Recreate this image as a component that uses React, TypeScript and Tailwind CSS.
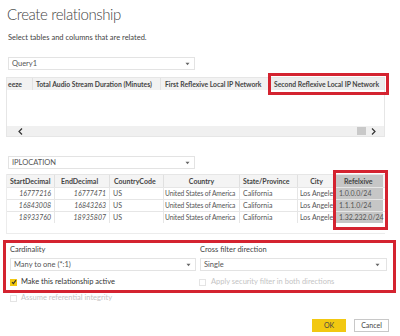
import React from "react";

const Caret = () => (
  <svg width="5" height="4" viewBox="0 0 5 4" className="shrink-0">
    <path d="M0.5 0.8 L4.5 0.8 L2.5 3.2 Z" fill="#666" />
  </svg>
);

const Dropdown = ({ label, w, caretPad = "pr-[4px]" }: { label: string; w: string; caretPad?: string }) => (
  <div className={`${w} h-[13px] border border-[#e3e3e3] bg-white flex items-center justify-between pl-[3px] ${caretPad}`}>
    <span className="text-[7.5px] leading-[11px] text-[#555]">{label}</span>
    <Caret />
  </div>
);

const Check = ({ on, dim }: { on?: boolean; dim?: boolean }) =>
  on ? (
    <div className="w-[7px] h-[7px] bg-[#f2c811] flex items-center justify-center shrink-0">
      <svg width="6" height="6" viewBox="0 0 6 6">
        <path d="M1 3.2 L2.4 4.6 L5 1.2" stroke="#333" strokeWidth="1.1" fill="none" />
      </svg>
    </div>
  ) : (
    <div className={`w-[7px] h-[7px] border ${dim ? "border-[#e4e4e4]" : "border-[#aaa]"} bg-white shrink-0`} />
  );

export default function App() {
  const rows = [
    ["16777216", "16777471", "1.0.0.0/24"],
    ["16843008", "16843263", "1.1.1.0/24"],
    ["18933760", "18935807", "1.32.232.0/24"],
  ];
  return (
    <div
      className="w-[400px] h-[336px] bg-white flex flex-col overflow-hidden text-[#333]"
      style={{ fontFamily: 'Lato, "Open Sans", sans-serif' }}
    >
      <div className="h-[28px] pl-[7px] text-[15px] font-light leading-[28px] tracking-[-0.4px] text-[#444]">
        Create relationship
      </div>
      <div className="mt-[4px] h-[12px] pl-[8px] text-[7.5px] leading-[12px] text-[#444]">
        Select tables and columns that are related.
      </div>

      <div className="mt-[13px] ml-[8px]">
        <Dropdown label="Query1" w="w-[187px]" />
      </div>

      {/* Table 1 */}
      <div className="relative mt-[7px] ml-[6px] w-[379px] h-[60px] border border-[#e6e6e6] flex flex-col">
        <div className="h-[12px] bg-[#f2f2f2] flex items-center text-[6.8px] font-bold text-[#444] whitespace-nowrap overflow-hidden">
          <div className="w-[26px] pl-[1px] border-r border-[#e2e2e2] h-full flex items-center">eeze</div>
          <div className="w-[128px] pl-[3px] border-r border-[#e2e2e2] h-full flex items-center">Total Audio Stream Duration (Minutes)</div>
          <div className="w-[108px] pl-[4px] border-r border-[#e2e2e2] h-full flex items-center">First Reflexive Local IP Network</div>
          <div className="flex-1 pl-[5px] h-full flex items-center bg-[#ececec]">Second Reflexive Local IP Network</div>
        </div>
        <div className="flex-1" />
        <div className="h-[10px] bg-[#f0f0f0] flex items-center justify-between pl-[11px] pr-[8px]">
          <svg width="5" height="7" viewBox="0 0 5 7">
            <path d="M4 0.5 L1 3.5 L4 6.5" stroke="#333" strokeWidth="1.2" fill="none" />
          </svg>
          <div className="flex items-center gap-[5px]">
            <div className="w-[9px] h-[8px] bg-[#c9c9c9]" />
            <svg width="5" height="7" viewBox="0 0 5 7">
              <path d="M1 0.5 L4 3.5 L1 6.5" stroke="#333" strokeWidth="1.2" fill="none" />
            </svg>
          </div>
        </div>
        <div className="absolute left-[261px] top-[-5px] w-[121px] h-[22px] border-[3px] border-[#d42330]" />
      </div>

      <div className="mt-[19px] ml-[8px]">
        <Dropdown label="IPLOCATION" w="w-[187px]" />
      </div>

      {/* Table 2 */}
      <div className="relative mt-[5px] ml-[6px] w-[379px] h-[60px] border-l border-b border-[#ececec] text-[7px] whitespace-nowrap">
        <div className="h-[13px] flex bg-[#f4f4f4] font-bold text-[#444] border-t border-[#e6e6e6]">
          <div className="w-[48px] pl-[3px] border-r border-[#e0e0e0] flex items-center">StartDecimal</div>
          <div className="w-[55px] pl-[6px] border-r border-[#e0e0e0] flex items-center">EndDecimal</div>
          <div className="w-[54px] pl-[4px] border-r border-[#e0e0e0] flex items-center">CountryCode</div>
          <div className="w-[76px] border-r border-[#e0e0e0] flex items-center justify-center">Country</div>
          <div className="w-[58px] pl-[3px] border-r border-[#e0e0e0] flex items-center">State/Province</div>
          <div className="w-[37px] flex items-center justify-center">City</div>
          <div className="w-[48px] pl-[9px] bg-[#c6c6c6] flex items-center">Refelxive</div>
        </div>
        {rows.map((r) => (
          <div key={r[0]} className="h-[12px] flex text-[#555] border-t border-[#e6e6e6]">
            <div className="w-[48px] pr-[3px] border-r border-[#e6e6e6] flex items-center justify-end italic">{r[0]}</div>
            <div className="w-[55px] pr-[3px] border-r border-[#e6e6e6] flex items-center justify-end italic">{r[1]}</div>
            <div className="w-[54px] pl-[3px] border-r border-[#e6e6e6] flex items-center">US</div>
            <div className="w-[76px] pl-[1px] border-r border-[#e6e6e6] flex items-center overflow-hidden text-[6.7px] tracking-[-0.1px]">United States of America</div>
            <div className="w-[58px] pl-[3px] border-r border-[#e6e6e6] flex items-center">California</div>
            <div className="w-[37px] pl-[2px] flex items-center overflow-hidden">Los Angeles</div>
            <div className="w-[48px] pl-[4px] bg-[#c6c6c6] flex items-center text-[#555]">{r[2]}</div>
          </div>
        ))}
        <div className="absolute left-[326px] top-[-4px] w-[55px] h-[60px] border-[3px] border-[#d42330]" />
      </div>

      {/* Bottom settings box */}
      <div className="mt-[6px] ml-[3px] w-[393px] h-[53px] border-[3px] border-[#d42330] pl-[4px] pr-[5px]">
        <div className="grid grid-cols-[186px_187px] gap-x-[4px] text-[7.5px] text-[#444]">
          <div className="h-[12px] leading-[12px] mt-[1px]">Cardinality</div>
          <div className="h-[12px] leading-[12px] mt-[1px]">Cross filter direction</div>
          <div className="mt-[2px]">
            <Dropdown label="Many to one (*:1)" w="w-[186px]" />
          </div>
          <div className="mt-[2px]">
            <Dropdown label="Single" w="w-[187px]" caretPad="pr-[6px]" />
          </div>
          <div className="mt-[6px] h-[10px] flex items-center gap-[4px]">
            <Check on />
            <span className="text-[#333]">Make this relationship active</span>
          </div>
          <div className="mt-[6px] h-[10px] flex items-center gap-[5px] -ml-[1px]">
            <Check dim />
            <span className="text-[#c4c4c4]">Apply security filter in both directions</span>
          </div>
        </div>
      </div>
      <div className="ml-[10px] mt-[0px] h-[10px] flex items-center gap-[4px] text-[7.5px]">
        <Check dim />
        <span className="text-[#c4c4c4]">Assume referential integrity</span>
      </div>

      <div className="mt-[16px] flex justify-end gap-[8px] pr-[11px]">
        <div className="w-[34px] h-[13px] bg-[#f2c811] flex items-center justify-center text-[7px] text-[#444]">OK</div>
        <div className="w-[35px] h-[13px] border border-[#c8c8c8] bg-white flex items-center justify-center text-[7px] text-[#444]">Cancel</div>
      </div>
    </div>
  );
}
